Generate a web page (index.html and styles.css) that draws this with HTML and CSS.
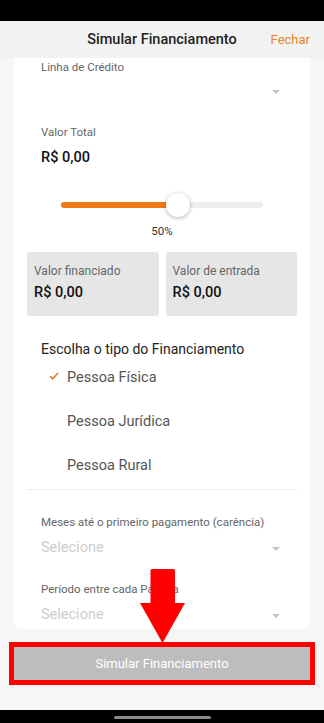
FILE: index.html
```html
<!DOCTYPE html>
<html lang="pt-BR">

<head>
    <meta charset="UTF-8" />
    <meta name="viewport" content="width=device-width, initial-scale=1.0" />
    <title>Simular Financiamento</title>
    <link rel="stylesheet" href="styles.css">
</head>

<body>
    <div class="status-bar"></div>

    <header class="topbar">
        <span></span>
        <h1>Simular Financiamento</h1>
        <a href="#" class="close">Fechar</a>
    </header>

    <div class="page">
        <div class="card">
            <div class="field">
                <label>Linha de Crédito</label>
                <div class="select"><span></span><i class="caret"></i></div>
            </div>

            <div class="field total">
                <label>Valor Total</label>
                <p class="value">R$ 0,00</p>
            </div>

            <div class="slider">
                <div class="track">
                    <div class="fill" style="width: 117px;"></div>
                    <div class="thumb" style="left: 117px;"></div>
                </div>
            </div>
            <p class="percent">50%</p>

            <div class="boxes">
                <div class="box">
                    <label>Valor financiado</label>
                    <p class="value">R$ 0,00</p>
                </div>
                <div class="box">
                    <label>Valor de entrada</label>
                    <p class="value">R$ 0,00</p>
                </div>
            </div>

            <div class="types">
                <h2>Escolha o tipo do Financiamento</h2>
                <ul>
                    <li class="selected">
                        <svg class="check" width="10" height="8" viewBox="0 0 10 8">
                            <path d="M1 4.2 L3.6 6.8 L9 1" fill="none" stroke="#e07a26" stroke-width="1.5" />
                        </svg>
                        Pessoa Física
                    </li>
                    <li>Pessoa Jurídica</li>
                    <li>Pessoa Rural</li>
                </ul>
            </div>

            <div class="field months">
                <label>Meses até o primeiro pagamento (carência)</label>
                <div class="select"><span>Selecione</span><i class="caret"></i></div>
            </div>

            <div class="field period">
                <label>Período entre cada Parcela</label>
                <div class="select"><span>Selecione</span><i class="caret"></i></div>
            </div>
        </div>

        <div class="footer">
            <div class="highlight">
                <button type="button" disabled>Simular Financiamento</button>
            </div>
            <svg class="arrow" width="45" height="74" viewBox="0 0 45 74">
                <rect x="10.5" y="0" width="24.5" height="36" rx="1.5" fill="#ff0000" />
                <polygon points="0,34 45,34 22.5,74" fill="#ff0000" />
            </svg>
        </div>
    </div>

    <div class="nav-bar"><span class="pill"></span></div>
</body>

</html>
```

FILE: styles.css
```css
* {
    margin: 0;
    padding: 0;
    box-sizing: border-box;
}

body {
    width: 324px;
    height: 723px;
    display: flex;
    flex-direction: column;
    background-color: #f6f6f6;
    font-family: Roboto, 'Noto Sans', sans-serif;
    color: #1f1f1f;
    overflow: hidden;
}

.status-bar {
    height: 21px;
    background-color: #000;
}

.topbar {
    height: 37px;
    display: grid;
    grid-template-columns: 1fr auto 1fr;
    align-items: center;
    background-color: #f2f2f2;
    padding: 0 14px;
}

.topbar h1 {
    font-size: 14.5px;
    font-weight: 500;
    color: #222;
}

.close {
    justify-self: end;
    font-size: 13px;
    color: #e8852a;
    text-decoration: none;
}

.page {
    flex: 1;
    padding: 0 14px;
}

.card {
    background-color: #fff;
    border-radius: 0 0 8px 8px;
    padding: 1px 13px 3px;
}

.field {
    padding: 0 14px;
}

label {
    display: block;
    font-size: 11.5px;
    line-height: 16px;
    color: #666;
}

.select {
    display: flex;
    align-items: center;
    justify-content: space-between;
    height: 30px;
    padding-right: 3px;
    font-size: 14.5px;
    color: #cdcdcd;
}

.caret {
    width: 0;
    height: 0;
    border-left: 4px solid transparent;
    border-right: 4px solid transparent;
    border-top: 4px solid #c4c4c4;
    margin-top: 3px;
}

.total {
    margin-top: 19px;
}

.value {
    margin-top: 8px;
    font-size: 14.5px;
    line-height: 20px;
    font-weight: 500;
    color: #111;
}

.slider {
    margin-top: 34px;
    padding: 0 34px;
}

.track {
    position: relative;
    height: 6px;
    border-radius: 3px;
    background-color: #eeeeee;
}

.fill {
    height: 100%;
    border-radius: 3px;
    background-color: #f07815;
}

.thumb {
    position: absolute;
    top: -9px;
    width: 24px;
    height: 24px;
    margin-left: -12px;
    border-radius: 50%;
    background-color: #fff;
    box-shadow: 0 1px 4px rgba(0, 0, 0, 0.3);
}

.percent {
    margin-top: 15px;
    text-align: center;
    font-size: 11.5px;
    line-height: 16px;
    color: #333;
}

.boxes {
    margin-top: 13px;
    display: flex;
    gap: 7px;
}

.box {
    flex: 1;
    height: 64px;
    padding: 11px 7px 0;
    border-radius: 3px;
    background-color: #e6e6e6;
}

.box label {
    font-size: 12px;
}

.box .value {
    margin-top: 4px;
}

.types {
    margin-top: 23px;
    padding: 0 14px 6px;
    border-bottom: 1px solid #ececec;
}

.types h2 {
    font-size: 14px;
    line-height: 20px;
    font-weight: 400;
    color: #222;
}

.types ul {
    list-style: none;
    display: flex;
    flex-direction: column;
    gap: 8px;
}

.types li {
    position: relative;
    height: 36px;
    display: flex;
    align-items: center;
    padding-left: 26px;
    font-size: 14.5px;
    color: #555;
}

.check {
    position: absolute;
    left: 8px;
    top: 13px;
}

.months {
    margin-top: 24px;
}

.months .select,
.period .select {
    margin-top: 5px;
    height: 24px;
}

.period {
    margin-top: 22px;
}

.footer {
    position: relative;
    margin-top: 13px;
}

.highlight {
    margin: 0 -5px;
    border: 5px solid #ff0000;
}

.highlight button {
    width: 100%;
    height: 33px;
    border: none;
    background-color: #bdbdbd;
    color: #fff;
    font-family: inherit;
    font-size: 13px;
}

.arrow {
    position: absolute;
    left: 126px;
    top: -73px;
}

.nav-bar {
    height: 13px;
    background-color: #000;
    display: flex;
    justify-content: center;
    padding-top: 6px;
}

.pill {
    width: 97px;
    height: 3px;
    border-radius: 2px;
    background-color: #8a8a8a;
}
```
